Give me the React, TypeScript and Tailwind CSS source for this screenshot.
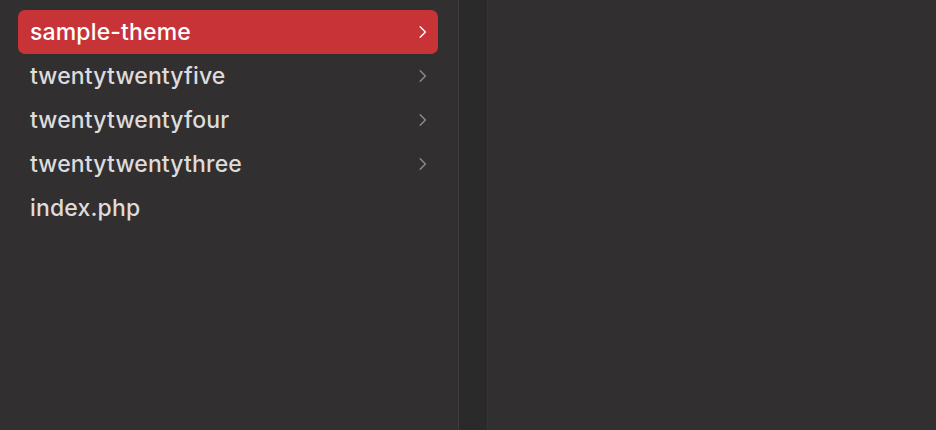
import React from 'react';

const items = [
  { name: 'sample-theme', folder: true },
  { name: 'twentytwentyfive', folder: true },
  { name: 'twentytwentyfour', folder: true },
  { name: 'twentytwentythree', folder: true },
  { name: 'index.php', folder: false },
];

const Chevron = ({ selected }: { selected: boolean }) => (
  <svg width="10" height="14" viewBox="0 0 10 14" fill="none">
    <path
      d="M2.2 1.8 L7.4 7 L2.2 12.2"
      stroke={selected ? '#ffffff' : '#8d8a8b'}
      strokeWidth="1.4"
      strokeLinecap="round"
      strokeLinejoin="round"
    />
  </svg>
);

const App: React.FC = () => {
  const selected = 0;
  return (
    <div className="flex w-[936px] h-[430px] bg-[#322f30] overflow-hidden" style={{ fontFamily: 'Inter, "Noto Sans", sans-serif' }}>
      {/* first column */}
      <div className="w-[458px] shrink-0 pt-[10px] pl-[18px] pr-[20px] flex flex-col">
        {items.map((it, i) => (
          <div
            key={it.name}
            className={`h-[44px] flex items-center justify-between pl-[12px] pr-[10px] rounded-[7px] ${
              i === selected ? 'bg-[#c83337] text-white' : 'text-[#dddbdc]'
            }`}
          >
            <span className="text-[23px] font-[450] tracking-[0.15px]">{it.name}</span>
            {it.folder && <Chevron selected={i === selected} />}
          </div>
        ))}
      </div>
      <div className="w-px shrink-0 bg-[#403d3e]" />
      {/* resize strip */}
      <div className="w-[28px] shrink-0 bg-[#2a2a2a]" />
      <div className="w-px shrink-0 bg-[#363435]" />
      <div className="flex-1 bg-[#322f30]" />
    </div>
  );
};

export default App;
